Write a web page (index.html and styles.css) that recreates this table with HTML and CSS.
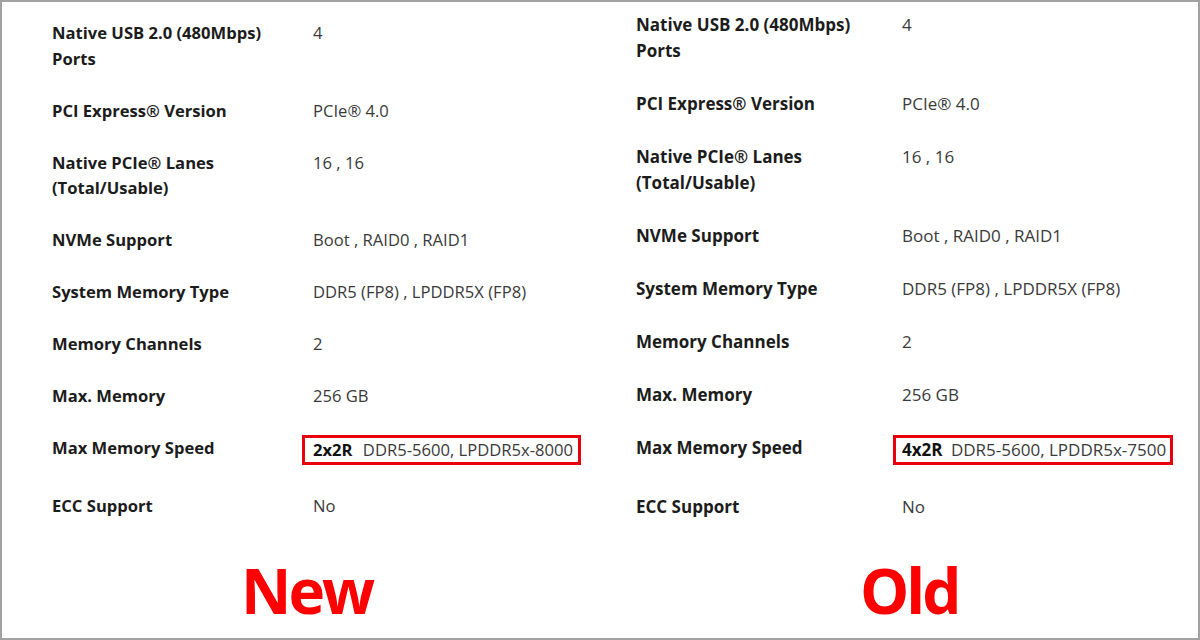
FILE: index.html
```html
<!DOCTYPE html>
<html>
<head>
<meta charset="utf-8">
<link rel="stylesheet" href="styles.css">
</head>
<body>
<div class="frame">
  <section class="panel panel-new">
    <div class="specs">
      <div class="row"><div class="label">Native USB 2.0 (480Mbps) Ports</div><div class="value">4</div></div>
      <div class="row"><div class="label">PCI Express® Version</div><div class="value">PCIe® 4.0</div></div>
      <div class="row"><div class="label">Native PCIe® Lanes (Total/Usable)</div><div class="value">16 , 16</div></div>
      <div class="row"><div class="label">NVMe Support</div><div class="value">Boot , RAID0 , RAID1</div></div>
      <div class="row"><div class="label">System Memory Type</div><div class="value">DDR5 (FP8) , LPDDR5X (FP8)</div></div>
      <div class="row"><div class="label">Memory Channels</div><div class="value">2</div></div>
      <div class="row"><div class="label">Max. Memory</div><div class="value">256 GB</div></div>
      <div class="row row-hl"><div class="label">Max Memory Speed</div><div class="value"><span class="hl"><b>2x2R</b> DDR5-5600, LPDDR5x-8000</span></div></div>
      <div class="row"><div class="label">ECC Support</div><div class="value">No</div></div>
    </div>
    <div class="tag">New</div>
  </section>
  <section class="panel panel-old">
    <div class="specs">
      <div class="row"><div class="label">Native USB 2.0 (480Mbps) Ports</div><div class="value">4</div></div>
      <div class="row"><div class="label">PCI Express® Version</div><div class="value">PCIe® 4.0</div></div>
      <div class="row"><div class="label">Native PCIe® Lanes (Total/Usable)</div><div class="value">16 , 16</div></div>
      <div class="row"><div class="label">NVMe Support</div><div class="value">Boot , RAID0 , RAID1</div></div>
      <div class="row"><div class="label">System Memory Type</div><div class="value">DDR5 (FP8) , LPDDR5X (FP8)</div></div>
      <div class="row"><div class="label">Memory Channels</div><div class="value">2</div></div>
      <div class="row"><div class="label">Max. Memory</div><div class="value">256 GB</div></div>
      <div class="row row-hl"><div class="label">Max Memory Speed</div><div class="value"><span class="hl"><b>4x2R</b> DDR5-5600, LPDDR5x-7500</span></div></div>
      <div class="row"><div class="label">ECC Support</div><div class="value">No</div></div>
    </div>
    <div class="tag">Old</div>
  </section>
</div>
</body>
</html>
```

FILE: styles.css
```css
html, body {
  margin: 0;
  padding: 0;
  background: #fff;
}
.frame {
  width: 1200px;
  height: 640px;
  box-sizing: border-box;
  border: 2px solid #a2a2a2;
  display: grid;
  grid-template-columns: 598px 598px;
  font-family: "Open Sans", "Liberation Sans", sans-serif;
  background: #fff;
}
.panel {
  display: flex;
  flex-direction: column;
  min-height: 0;
}
.panel-new {
  --fs: 16.6px;
  --lh: 25.6px;
  --gap: 26.4px;
  --labelw: 261px;
  padding: 18px 0 0 50px;
}
.panel-old {
  --fs: 17px;
  --lh: 26px;
  --gap: 27px;
  --labelw: 266px;
  padding: 10px 0 0 36px;
}
.specs {
  display: flex;
  flex-direction: column;
  gap: var(--gap);
  font-size: var(--fs);
  line-height: var(--lh);
}
.row {
  display: grid;
  grid-template-columns: var(--labelw) 1fr;
}
.row-hl {
  margin-bottom: 2px;
}
.label {
  font-weight: 700;
  color: #1c1c1c;
  max-width: 230px;
}
.value {
  color: #3a3a3a;
}
.hl {
  display: inline-block;
  border: 3px solid #e8000c;
  padding: 0 5px 0 8px;
  margin-left: -11px;
  line-height: 24px;
}
.panel-old .hl {
  margin-left: -9px;
  padding-left: 6px;
  padding-right: 4px;
}
.hl b {
  color: #111;
  font-weight: 700;
  margin-right: 6px;
}
.panel-old .hl b {
  margin-right: 4px;
}
.tag {
  margin-top: auto;
  margin-bottom: 17px;
  font-size: 62px;
  line-height: 1;
  font-weight: 700;
  letter-spacing: -3px;
  color: #ff0000;
  height: 62px;
}
.panel-new .tag {
  padding-left: 189px;
}
.panel-old .tag {
  padding-left: 224px;
}
```
